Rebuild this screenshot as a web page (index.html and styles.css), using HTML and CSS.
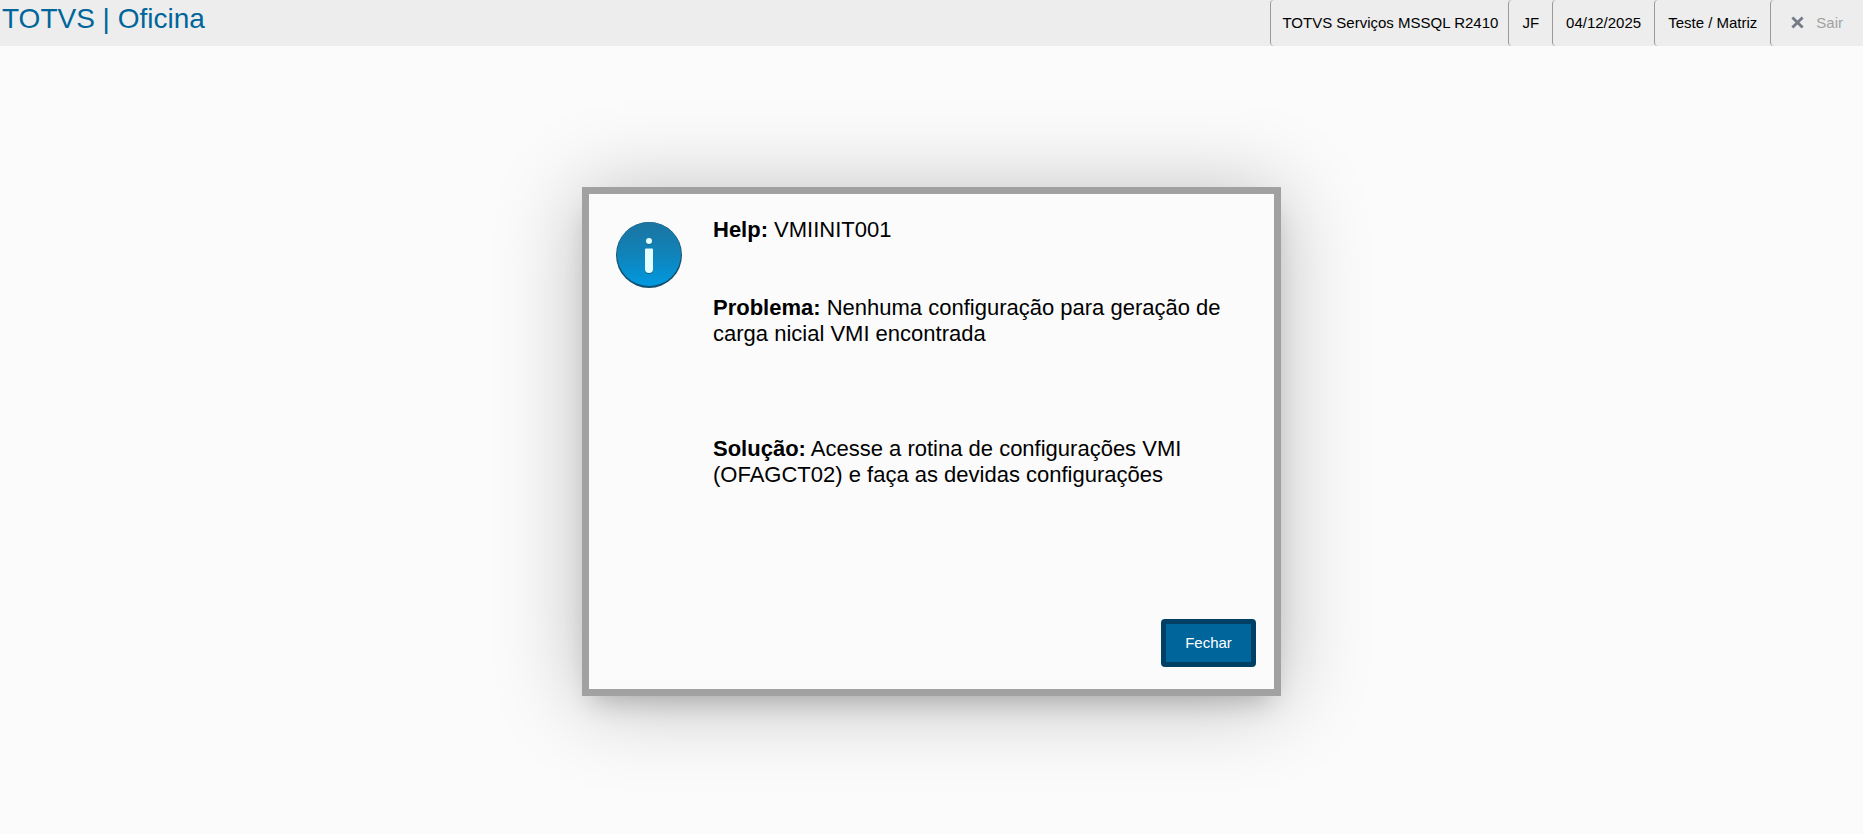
FILE: index.html
```html
<!DOCTYPE html>
<html lang="pt-BR">
<head>
    <meta charset="UTF-8">
    <meta name="viewport" content="width=device-width, initial-scale=1.0">
    <title>TOTVS | Oficina</title>
    <link rel="stylesheet" href="styles.css">
</head>
<body>
    <header class="topbar">
        <h1 class="title">TOTVS | Oficina</h1>
        <div class="session">
            <span class="session-item environment">TOTVS Serviços MSSQL R2410</span>
            <span class="session-item">JF</span>
            <span class="session-item">04/12/2025</span>
            <span class="session-item">Teste / Matriz</span>
            <button type="button" class="session-item exit">
                <svg class="exit-icon" viewBox="0 0 14 14" aria-hidden="true">
                    <path d="M1.5 1.5 L12.5 12.5 M12.5 1.5 L1.5 12.5" stroke="#747b86" stroke-width="3" fill="none"/>
                </svg>
                Sair
            </button>
        </div>
    </header>

    <main class="content">
        <div class="dialog" role="dialog" aria-labelledby="help-code">
            <div class="dialog-body">
                <svg class="info-icon" viewBox="0 0 66 66" aria-hidden="true">
                    <defs>
                        <linearGradient id="info-fill" x1="0" y1="0" x2="0" y2="1">
                            <stop offset="0" stop-color="#1b74a0"/>
                            <stop offset="0.5" stop-color="#1083b9"/>
                            <stop offset="1" stop-color="#0099e0"/>
                        </linearGradient>
                    </defs>
                    <circle cx="33" cy="33" r="33" fill="#12506f"/>
                    <ellipse cx="33" cy="32" rx="32" ry="32" fill="url(#info-fill)"/>
                    <circle cx="33" cy="20" r="3" fill="#0d668e"/>
                    <rect x="29" y="27" width="8" height="25" rx="4" fill="#0d668e"/>
                    <circle cx="33" cy="19" r="3" fill="#e4ffff"/>
                    <path d="M29 27.500 q0 -1 1 -1 h6 q1 0 1 1 v19.500 a4 4 0 0 1 -8 0 z" fill="#e4ffff"/>
                </svg>
                <div class="message">
                    <p class="help" id="help-code"><strong>Help:</strong> VMIINIT001</p>
                    <p class="problem"><strong>Problema:</strong> Nenhuma configuração para geração de carga nicial VMI encontrada</p>
                    <p class="solution"><strong>Solução:</strong> Acesse a rotina de configurações VMI (OFAGCT02) e faça as devidas configurações</p>
                </div>
            </div>
            <div class="dialog-footer">
                <button type="button" class="close-btn">Fechar</button>
            </div>
        </div>
    </main>
</body>
</html>
```
FILE: styles.css
```css
* {
    box-sizing: border-box;
}

body {
    margin: 0;
    min-height: 100vh;
    display: flex;
    flex-direction: column;
    font-family: "Liberation Sans", Arial, sans-serif;
    background-color: #fbfbfb;
    color: #000;
}

.topbar {
    display: flex;
    justify-content: space-between;
    height: 46px;
    background-color: #ededed;
}

.title {
    margin: 0;
    padding: 3px 2px;
    font-size: 28px;
    line-height: 32px;
    font-weight: normal;
    color: #00659b;
}

.session {
    display: flex;
}

.session-item {
    display: flex;
    align-items: center;
    padding: 0 13px 2px;
    border-left: 1px solid #999;
    border-radius: 4px;
    font-size: 15px;
}

.environment {
    padding-left: 11px;
    padding-right: 10px;
}

.exit {
    gap: 12px;
    padding: 0 20px 2px;
    border-width: 0 0 0 1px;
    background: none;
    font-family: inherit;
    color: #a1a1a1;
    cursor: pointer;
}

.exit-icon {
    width: 13px;
    height: 13px;
}

.content {
    flex: 1;
    display: flex;
    align-items: center;
    justify-content: center;
    padding-top: 2px;
}

.dialog {
    display: flex;
    flex-direction: column;
    width: 100%;
    max-width: 699px;
    min-height: 509px;
    border: 7px solid #a1a1a1;
    background-color: #fbfbfb;
    box-shadow: 0 15px 25px -10px rgba(0, 0, 0, 0.2), 0 6px 80px rgba(0, 0, 0, 0.25);
}

.dialog-body {
    flex: 1;
    display: flex;
    gap: 31px;
    padding: 23px 27px;
}

.info-icon {
    flex: none;
    width: 66px;
    height: 66px;
    margin-top: 5px;
}

.message {
    font-size: 22px;
    line-height: 26px;
}

.message p {
    margin: 0;
}

.message .problem {
    margin-top: 52px;
}

.message .solution {
    margin-top: 89px;
}

.dialog-footer {
    display: flex;
    justify-content: flex-end;
    padding: 0 18px 22px;
}

.close-btn {
    height: 48px;
    min-width: 95px;
    border: 5px solid #004064;
    border-radius: 4px;
    background-color: #00659b;
    color: #fff;
    font-family: inherit;
    font-size: 15px;
    cursor: pointer;
}
```
